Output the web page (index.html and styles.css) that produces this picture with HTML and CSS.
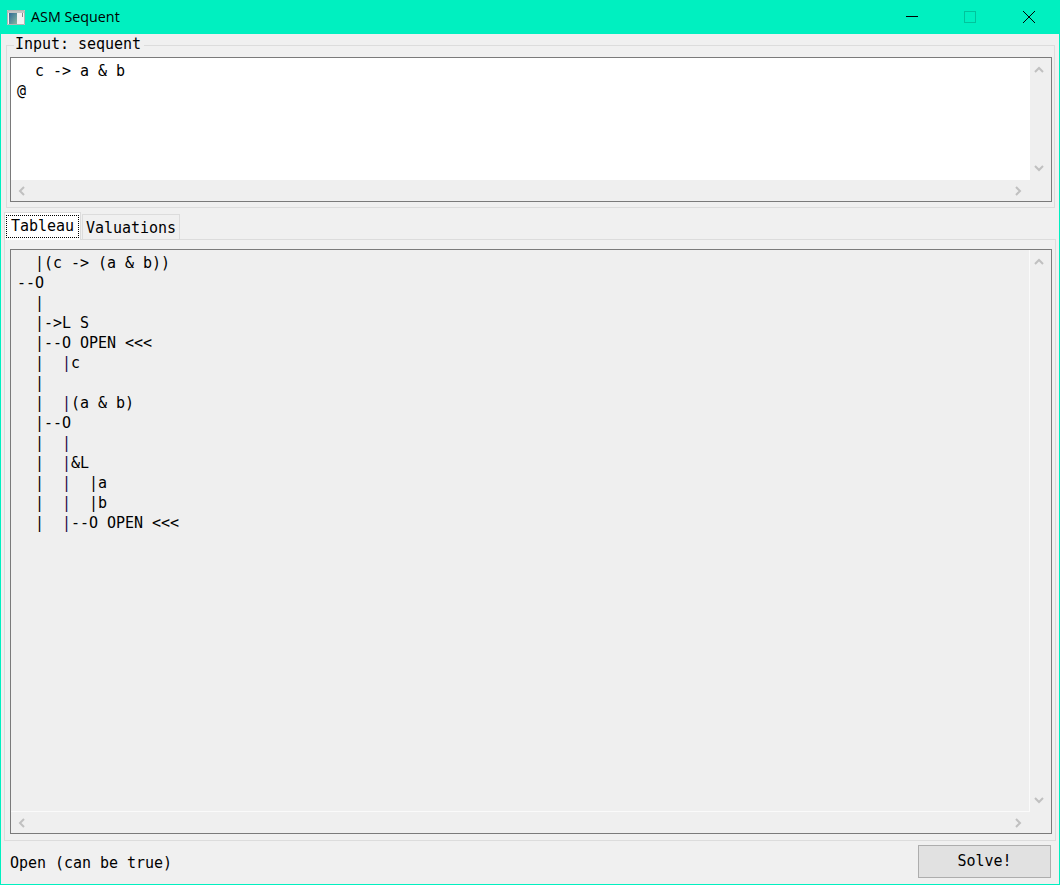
FILE: index.html
```html
<!DOCTYPE html>
<html lang="en">
<head>
<meta charset="utf-8">
<title>ASM Sequent</title>
<link rel="stylesheet" href="styles.css">
</head>
<body>
<div class="window">
  <header class="titlebar">
    <svg class="app-icon" width="18" height="15" viewBox="0 0 18 15">
      <defs><linearGradient id="g" x1="0" y1="0" x2="1" y2="1"><stop offset="0" stop-color="#2f6a96"/><stop offset="1" stop-color="#86b8a0"/></linearGradient></defs>
      <rect width="18" height="15" fill="#f2f2f2"/>
      <path d="M0.5 14.5V0.5H17.5V14.5H0.5" fill="none" stroke="#b4b4b4"/>
      <rect x="1" y="1" width="16" height="2" fill="#c4c4c4"/>
      <rect x="2" y="3" width="8" height="11" fill="url(#g)"/>
      <rect x="15" y="3" width="1" height="4" fill="#8a8a8a"/>
    </svg>
    <span class="title">ASM Sequent</span>
    <div class="controls">
      <div class="ctl"><svg width="12" height="12" viewBox="0 0 12 12"><path d="M0 5.5H12" stroke="#000" stroke-width="1"/></svg></div>
      <div class="ctl"><svg width="12" height="12" viewBox="0 0 12 12"><rect x="0.5" y="0.5" width="11" height="11" fill="none" stroke="#00c49c"/></svg></div>
      <div class="ctl"><svg width="12" height="12" viewBox="0 0 12 12"><path d="M0 0L12 12M12 0L0 12" stroke="#000" stroke-width="1"/></svg></div>
    </div>
  </header>
  <main class="content">
    <fieldset class="group">
      <legend class="legend">Input: sequent</legend>
      <div class="box box-white box-input">
        <pre class="text">  c -&gt; a &amp; b
@</pre>
        <div class="vbar">
          <svg class="chev" width="10" height="7" viewBox="0 0 10 7"><path d="M1 6L5 2L9 6" /></svg>
          <svg class="chev" width="10" height="7" viewBox="0 0 10 7"><path d="M1 1L5 5L9 1" /></svg>
        </div>
        <div class="hbar">
          <svg class="chev" width="7" height="10" viewBox="0 0 7 10"><path d="M6 1L2 5L6 9" /></svg>
          <svg class="chev" width="7" height="10" viewBox="0 0 7 10"><path d="M1 1L5 5L1 9" /></svg>
        </div>
        <div class="corner"></div>
      </div>
    </fieldset>
    <div class="tabs">
      <div class="tab tab-active"><span class="tab-label">Tableau</span></div>
      <div class="tab">Valuations</div>
    </div>
    <section class="pane">
      <div class="box box-gray box-tree">
        <pre class="text">  |(c -&gt; (a &amp; b))
--O
  |
  |-&gt;L S
  |--O OPEN &lt;&lt;&lt;
  |  <span class="p">|</span>c
  |
  |  <span class="p">|</span>(a &amp; b)
  |--O
  |  <span class="p">|</span>
  |  <span class="p">|</span>&amp;L
  |  <span class="p">|</span>  |a
  |  <span class="p">|</span>  |b
  |  <span class="p">|</span>--O OPEN &lt;&lt;&lt;</pre>
        <div class="vbar">
          <svg class="chev" width="10" height="7" viewBox="0 0 10 7"><path d="M1 6L5 2L9 6" /></svg>
          <svg class="chev" width="10" height="7" viewBox="0 0 10 7"><path d="M1 1L5 5L9 1" /></svg>
        </div>
        <div class="hbar">
          <svg class="chev" width="7" height="10" viewBox="0 0 7 10"><path d="M6 1L2 5L6 9" /></svg>
          <svg class="chev" width="7" height="10" viewBox="0 0 7 10"><path d="M1 1L5 5L1 9" /></svg>
        </div>
        <div class="corner"></div>
      </div>
    </section>
    <footer class="status">
      <span>Open (can be true)</span>
      <button class="solve" type="button">Solve!</button>
    </footer>
  </main>
</div>
</body>
</html>
```
FILE: styles.css
```css
* { box-sizing: border-box; }
html, body { margin: 0; padding: 0; }
body {
  width: 1060px;
  height: 885px;
  overflow: hidden;
  font-family: "DejaVu Sans Mono", monospace;
  font-size: 15px;
  letter-spacing: -0.03px;
  line-height: 20px;
  color: #000;
}
.window {
  width: 1060px;
  height: 885px;
  display: flex;
  flex-direction: column;
  border: 1px solid #00f0c0;
  border-top: 0;
  background: #f0f0f0;
}
.titlebar {
  height: 34px;
  flex: none;
  margin: 0 -1px;
  background: #00f0c0;
  display: flex;
  align-items: center;
  padding-left: 7px;
}
.app-icon { flex: none; margin-right: 6px; }
.title {
  font-family: "Open Sans", sans-serif;
  font-size: 14.3px;
  letter-spacing: 0;
  color: #000;
}
.controls { margin-left: auto; margin-right: 2px; display: flex; height: 100%; }
.ctl {
  width: 58.5px;
  display: flex;
  align-items: center;
  justify-content: center;
}
.content {
  flex: 1;
  display: flex;
  flex-direction: column;
  padding: 1px 3px 0;
  min-height: 0;
}
.group {
  margin: 0 1px 0 2px;
  padding: 2px 2px 5px 3px;
  border: 1px solid #dcdcdc;
  height: 173px;
  min-width: 0;
}
.legend {
  margin-left: 4px;
  padding: 0 3px 0 1px;
  line-height: 19px;
  height: 20px;
}
.box {
  display: grid;
  grid-template-columns: 1fr 21px;
  grid-template-rows: 1fr 21px;
  border: 1px solid #7a7a7a;
}
.box-white .text { background: #fff; }
.box-input { height: 145px; }
.box-gray { background: #efefef; }
.box-gray .text { border-right: 1px solid #fafafa; border-bottom: 1px solid #fafafa; }
.text {
  margin: 0;
  padding: 3px 6px;
  font: inherit;
  line-height: 20px;
  overflow: hidden;
  min-width: 0;
  color: #000;
}
.p { color: #2c0c44; }
.vbar {
  background: #efefef;
  display: flex;
  flex-direction: column;
  justify-content: space-between;
  align-items: center;
  padding: 8px 3px 8px 0;
}
.hbar {
  background: #efefef;
  display: flex;
  justify-content: space-between;
  align-items: center;
  padding: 0 8px 0 7px;
}
.corner { background: #efefef; }
.chev { display: block; flex: none; }
.chev path { fill: none; stroke: #c0c0c0; stroke-width: 2; }
.tabs {
  display: flex;
  align-items: flex-end;
  height: 31px;
  flex: none;
}
.tab {
  height: 25px;
  width: 98px;
  border: 1px solid #dcdcdc;
  border-bottom: 0;
  background: #f0f0f0;
  padding: 3px 0 0 3px;
  line-height: 20px;
}
.tab-active {
  width: 77px;
  height: 28px;
  background: #fff;
  margin-right: 1px;
  padding: 2px 1px 1px;
  position: relative;
  z-index: 1;
  margin-bottom: -1px;
}
.tab-label {
  display: block;
  height: 23px;
  border: 1px dotted #000;
  padding-left: 4px;
  line-height: 20px;
}
.pane {
  height: 602px;
  flex: none;
  border: 1px solid #dcdcdc;
  padding: 9px 3px 6px 5px;
  display: flex;
}
.box-tree { flex: 1; height: 100%; }
.status {
  flex: 1;
  display: flex;
  align-items: center;
  justify-content: space-between;
  padding: 0 5px 0 6px;
}
.solve {
  width: 133px;
  height: 33px;
  border: 1px solid #adadad;
  background: #e1e1e1;
  font: inherit;
  color: #000;
  padding: 0;
  margin-bottom: 3px;
}
```
